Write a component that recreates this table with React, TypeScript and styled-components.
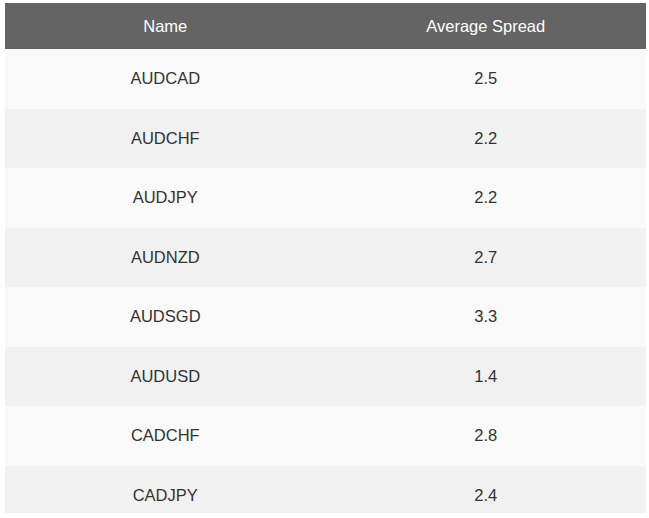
import React from "react";
import styled, { createGlobalStyle } from "styled-components";

const Global = createGlobalStyle`
  html, body { margin: 0; padding: 0; background: #ffffff; }
  body { font-family: "Liberation Sans", Arial, sans-serif; }
`;

const Page = styled.div`
  padding: 3px 3px 0 5px;
`;

const Clip = styled.div`
  width: 641px;
  height: 510px;
  overflow: hidden;
`;

const Table = styled.table`
  width: 641px;
  border-collapse: collapse;
  table-layout: fixed;
  font-size: 16.5px;
`;

const HeadCell = styled.th`
  background: #646464;
  color: #ffffff;
  font-weight: normal;
  height: 46px;
  padding: 0;
  text-align: center;
  vertical-align: middle;
`;

const Row = styled.tr<{ $alt: boolean }>`
  background: ${(p) => (p.$alt ? "#f1f1f1" : "#f9f9f9")};
`;

const Cell = styled.td`
  height: 59.5px;
  padding: 0;
  color: #333333;
  text-align: center;
  vertical-align: middle;
`;

const rows: [string, string][] = [
  ["AUDCAD", "2.5"],
  ["AUDCHF", "2.2"],
  ["AUDJPY", "2.2"],
  ["AUDNZD", "2.7"],
  ["AUDSGD", "3.3"],
  ["AUDUSD", "1.4"],
  ["CADCHF", "2.8"],
  ["CADJPY", "2.4"],
];

export default function App() {
  return (
    <Page>
      <Global />
      <Clip>
        <Table>
          <thead>
            <tr>
              <HeadCell>Name</HeadCell>
              <HeadCell>Average Spread</HeadCell>
            </tr>
          </thead>
          <tbody>
            {rows.map(([n, v], i) => (
              <Row key={n} $alt={i % 2 === 1}>
                <Cell>{n}</Cell>
                <Cell>{v}</Cell>
              </Row>
            ))}
          </tbody>
        </Table>
      </Clip>
    </Page>
  );
}
